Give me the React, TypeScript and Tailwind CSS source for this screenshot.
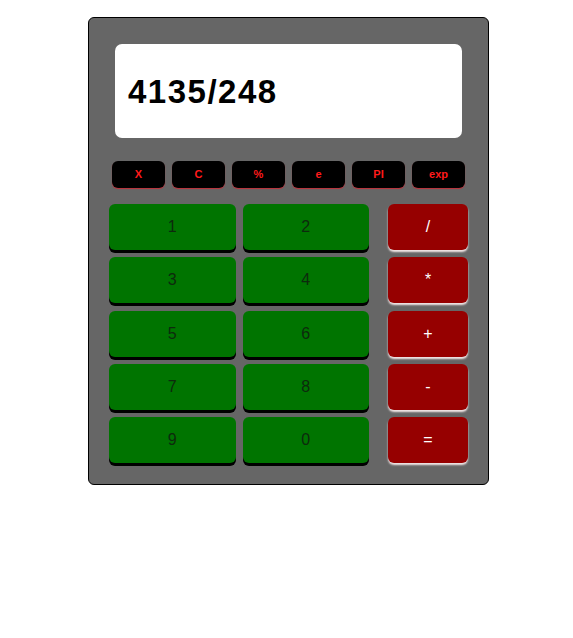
const FUNCS = ["X", "C", "%", "e", "PI", "exp"];
const DIGITS = [
  ["1", "2"],
  ["3", "4"],
  ["5", "6"],
  ["7", "8"],
  ["9", "0"],
];
const OPS = ["/", "*", "+", "-", "="];

export default function App() {
  return (
    <div className="min-h-[638px] bg-white pt-[17px] pl-[88px] font-['Liberation_Sans',Arial,sans-serif]">
      <div className="h-[468px] w-[401px] rounded-[6px] border border-black bg-[#666666]">
        <div className="ml-[26px] mt-[26px] flex h-[94px] w-[347px] items-center rounded-[7px] bg-white pl-[13px]">
          <span className="text-[33px] font-bold leading-none tracking-[1.5px] text-black">
            4135/248
          </span>
        </div>

        <div className="ml-[23px] mt-[23px] flex gap-[7px]">
          {FUNCS.map((f) => (
            <button
              key={f}
              className="h-[27px] w-[53px] rounded-[6px] bg-black text-[11px] font-bold text-[#ff1a1a] shadow-[0_1px_1px_#c0303a]"
            >
              {f}
            </button>
          ))}
        </div>

        <div className="ml-[20px] mt-[16px] flex">
          <div className="flex flex-col gap-[7.3px]">
            {DIGITS.map((row, i) => (
              <div key={i} className="flex gap-[7px]">
                {row.map((d) => (
                  <button
                    key={d}
                    className="h-[46px] w-[126.5px] rounded-[6px] bg-[#007400] text-[16px] text-[#0d2a0d] shadow-[0_3px_0_#000]"
                  >
                    {d}
                  </button>
                ))}
              </div>
            ))}
          </div>
          <div className="ml-[19px] flex flex-col gap-[7.3px]">
            {OPS.map((o) => (
              <button
                key={o}
                className="h-[46px] w-[80px] rounded-[6px] bg-[#960000] text-[16px] text-white shadow-[0_2px_2px_#f2e6e6]"
              >
                {o}
              </button>
            ))}
          </div>
        </div>
      </div>
    </div>
  );
}
